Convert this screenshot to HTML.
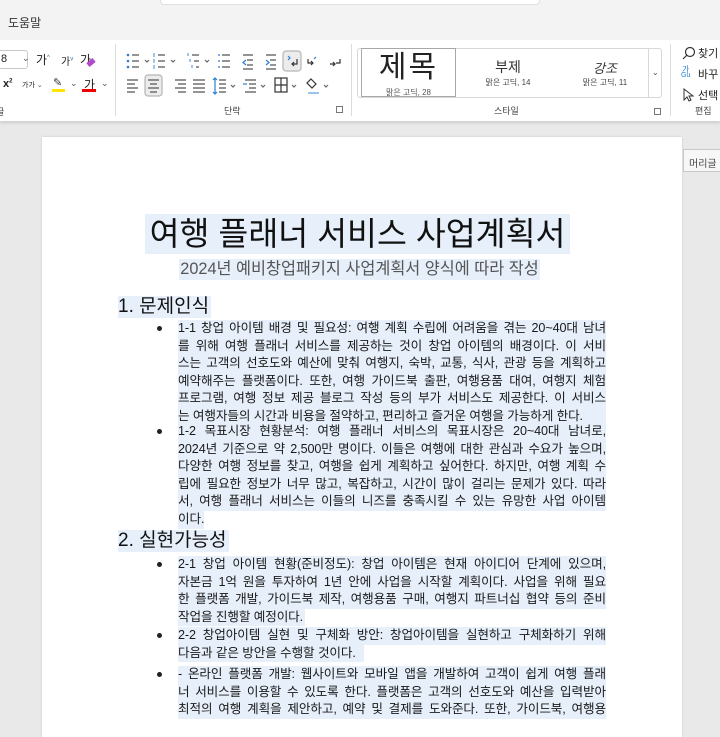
<!DOCTYPE html>
<html><head><meta charset="utf-8"><style>
*{margin:0;padding:0;box-sizing:border-box}
body{width:720px;height:715px;overflow:hidden;background:#e9e9e9;font-family:"Liberation Sans","Noto Sans CJK KR","NanumGothic",sans-serif;position:relative;color:#222}
.a{position:absolute;white-space:nowrap}
.top{position:absolute;left:0;top:0;width:720px;height:40px;background:#f3f3f3}
.rib{position:absolute;left:0;top:40px;width:720px;height:81px;background:#fff;box-shadow:0 2px 3px rgba(0,0,0,.12)}
.sep{position:absolute;top:44px;width:1px;height:72px;background:#dcdcdc}
.lbl{font-size:9px;color:#444}
.page{position:absolute;left:42px;top:137px;width:640px;height:600px;background:#fff;box-shadow:0 0 2px rgba(0,0,0,.15)}
.hl{background:#e6effa}
.ln{position:absolute;left:178px;width:428px;font-size:12.6px;line-height:17.6px;height:17.6px;text-align:justify;text-align-last:justify;white-space:nowrap;background:#e6effa;color:#1a1a1a;letter-spacing:-.1px}
.ln.l{text-align-last:left}
.b{position:absolute;left:157px;width:5px;height:5px;border-radius:50%;background:#222}
.h{position:absolute;left:118px;font-size:19px;line-height:22px;background:#e6effa;padding-right:2px;color:#111}
svg{position:absolute}
</style></head><body>
<div class="top"></div>
<div class="a" style="left:160px;top:0;width:380px;height:5px;background:#fff;border:1px solid #e0e0e0;border-top:none;border-radius:0 0 4px 4px"></div>
<div class="a" style="left:8px;top:14px;font-size:12px;color:#333">도움말</div>
<div class="rib"></div>
<div class="a" style="left:-4px;top:50px;width:32px;height:19px;border:1px solid #c8c8c8;border-radius:3px;background:#fff;font-size:11px;padding:2px 0 0 4px">8</div>
<div class="a" style="left:22px;top:53px;font-size:9px;color:#555">⌄</div>
<div class="a" style="left:36px;top:51px;font-size:12px">가<sup style="font-size:6px;color:#27a">^</sup></div>
<div class="a" style="left:61px;top:53px;font-size:10px">가<sup style="font-size:6px;color:#27a">v</sup></div>
<div class="a" style="left:80px;top:51px;font-size:12px">가</div>
<div class="a" style="left:87px;top:60px;width:8px;height:5px;background:#b04bc9;transform:rotate(-40deg)"></div>
<div class="a" style="left:3px;top:78px;font-size:11px;font-weight:bold">x<sup style="font-size:6px">2</sup></div>
<div class="a" style="left:22px;top:80px;font-size:7px">가가 <span style="color:#555">⌄</span></div>
<div class="a" style="left:53px;top:76px;font-size:11px;color:#333">✎</div>
<div class="a" style="left:52px;top:89px;width:13px;height:3px;background:#ffe600"></div>
<div class="a" style="left:70px;top:78px;font-size:9px;color:#555">⌄</div>
<div class="a" style="left:84px;top:76px;font-size:12px">가</div>
<div class="a" style="left:82px;top:89px;width:14px;height:3px;background:#e00"></div>
<div class="a" style="left:101px;top:78px;font-size:9px;color:#555">⌄</div>
<div class="a lbl" style="left:-4px;top:105px">글</div>
<div class="sep" style="left:115px"></div>
<svg width="240" height="60" style="left:115px;top:48px" stroke="#555" stroke-width="1.2" fill="none">
 <g><circle cx="13" cy="7" r="1.3" fill="#2a7fd4" stroke="none"/><circle cx="13" cy="13" r="1.3" fill="#2a7fd4" stroke="none"/><circle cx="13" cy="19" r="1.3" fill="#2a7fd4" stroke="none"/><path d="M17 7h7M17 13h7M17 19h7"/><path d="M30 12l2 2 2-2" stroke="#666"/></g>
 <g transform="translate(26,0)"><path d="M17 7h7M17 13h7M17 19h7"/><path d="M13 5v4M13 11v4M13 17v4" stroke="#2a7fd4" stroke-width=".9"/><path d="M30 12l2 2 2-2" stroke="#666"/></g>
 <g transform="translate(60,0)"><path d="M17 7h7M19 13h5M21 19h3"/><path d="M13 5v3M15 11v3M17 17v3" stroke="#2a7fd4" stroke-width=".9"/><path d="M30 12l2 2 2-2" stroke="#666"/></g>
 <g transform="translate(90,0)"><path d="M17 7h8M17 13h8M17 19h8"/><path d="M13 7h2M13 13h2M13 19h2" stroke="#2a7fd4"/></g>
 <path d="M128 7h10M132 12h6M132 17h6M128 21h10"/><path d="M131 12l-3 2.5 3 2.5" stroke="#2a7fd4"/>
 <path d="M151 7h10M155 12h6M155 17h6M151 21h10"/><path d="M151 12l3 2.5-3 2.5" stroke="#2a7fd4"/>
 <rect x="168" y="3" width="18" height="20" rx="3" fill="#ececec" stroke="#b5b5b5"/>
 <path d="M173 8l2 2-2 2" stroke="#2a7fd4"/><path d="M182 11v5h-5M179 14l-2 2 2 2" stroke="#333"/>
 <path d="M193 11v4h5M196 13l2 2-2 2" stroke="#333"/><path d="M201 9l-2 2" stroke="#2a7fd4"/>
 <path d="M215 16h5M218 14l2 2-2 2" stroke="#333"/><path d="M225 11v4h-4" stroke="#333"/>
 <path d="M12 32h11M12 36h8M12 40h11M12 44h8"/>
 <rect x="30" y="27" width="17" height="21" rx="3" fill="#ececec" stroke="#b5b5b5"/><path d="M33 32h11M35 36h7M33 40h11M35 44h7"/>
 <path d="M60 32h11M63 36h8M60 40h11M63 44h8"/>
 <path d="M78 32h12M78 36h12M78 40h12M78 44h12"/>
 <path d="M104 32h7M104 36h7M104 40h7M104 44h7"/><path d="M100 30v16M98 32l2-2 2 2M98 44l2 2 2-2" stroke="#2a7fd4"/><path d="M116 37l2 2 2-2" stroke="#666"/>
 <path d="M130 32h11M134 36h7M134 40h7M130 44h11"/><path d="M128 36h4" stroke="#2a7fd4"/><path d="M146 37l2 2 2-2" stroke="#666"/>
 <rect x="160" y="30" width="12" height="14" stroke="#333"/><path d="M166 30v14M160 37h12" stroke="#333"/><path d="M177 37l2 2 2-2" stroke="#666"/>
 <path d="M196 31l5 5-4 4-5-5z" stroke="#333"/><path d="M193 45h11" stroke="#9cc3ea" stroke-width="2"/><path d="M209 37l2 2 2-2" stroke="#666"/>
</svg>
<div class="a lbl" style="left:224px;top:104px">단락</div>
<div class="a" style="left:336px;top:106px;width:7px;height:7px;border:1px solid #777"></div>
<div class="sep" style="left:351px"></div>
<div class="a" style="left:357px;top:48px;width:305px;height:50px;border:1px solid #d8d8d8;border-radius:3px"></div>
<div class="a" style="left:361px;top:48px;width:95px;height:49px;border:1px solid #a8a8a8;overflow:hidden;text-align:center">
 <div style="font-size:30px;line-height:34px;margin-top:2px;letter-spacing:2px">제목</div>
 <div style="font-size:8px;color:#555;margin-top:2px">맑은 고딕, 28</div>
</div>
<div class="a" style="left:478px;top:57px;width:60px;text-align:center;font-size:14px;color:#333">부제</div>
<div class="a" style="left:470px;top:77px;width:76px;text-align:center;font-size:8px;color:#444">맑은 고딕, 14</div>
<div class="a" style="left:575px;top:58px;width:60px;text-align:center;font-size:13px;font-style:italic;color:#333">강조</div>
<div class="a" style="left:567px;top:77px;width:76px;text-align:center;font-size:8px;color:#444">맑은 고딕, 11</div>
<div class="a" style="left:648px;top:48px;width:1px;height:50px;background:#d8d8d8"></div>
<div class="a" style="left:652px;top:68px;font-size:8px;color:#555">⌄</div>
<div class="a lbl" style="left:494px;top:104px">스타일</div>
<div class="a" style="left:654px;top:108px;width:7px;height:7px;border:1px solid #777"></div>
<div class="sep" style="left:670px"></div>
<svg width="14" height="14" style="left:682px;top:46px" stroke="#333" stroke-width="1.2" fill="none"><circle cx="8" cy="6" r="4.5"/><path d="M5 9l-4 4"/></svg>
<div class="a" style="left:698px;top:45px;font-size:11px">찾기</div>
<div class="a" style="left:682px;top:64px;font-size:8px;color:#2a7fd4">가<br></div>
<div class="a" style="left:681px;top:72px;font-size:7px;color:#2a7fd4">Gu</div>
<div class="a" style="left:698px;top:66px;font-size:11px">바꾸</div>
<svg width="12" height="14" style="left:682px;top:88px" stroke="#333" stroke-width="1" fill="none"><path d="M2 1v11l3-3 2 4 2-1-2-4h4z"/></svg>
<div class="a" style="left:698px;top:87px;font-size:11px">선택</div>
<div class="a lbl" style="left:695px;top:104px">편집</div>
<div class="page"></div>
<div class="a" style="left:683px;top:149px;width:40px;height:23px;border:1px solid #c8c8c8;background:#f7f7f7;font-size:10px;color:#444;padding:5px 0 0 5px">머리글</div>
<div class="a hl" style="left:145px;top:214px;width:425px;height:40px"></div>
<div class="a" style="left:145px;top:212px;width:425px;text-align:center;font-size:32.5px;line-height:44px;color:#111;letter-spacing:0">여행 플래너 서비스 사업계획서</div>
<div class="a hl" style="left:179px;top:259px;width:361px;height:21px"></div>
<div class="a" style="left:179px;top:259px;width:361px;text-align:center;font-size:16.3px;line-height:21px;color:#555">2024년 예비창업패키지 사업계획서 양식에 따라 작성</div>

<div class="h" style="top:296px">1. 문제인식</div>
<div class="b" style="top:326px"></div>
<div class="ln" style="top:320px">1-1 창업 아이템 배경 및 필요성: 여행 계획 수립에 어려움을 겪는 20~40대 남녀</div>
<div class="ln" style="top:337.6px">를 위해 여행 플래너 서비스를 제공하는 것이 창업 아이템의 배경이다. 이 서비</div>
<div class="ln" style="top:355.2px">스는 고객의 선호도와 예산에 맞춰 여행지, 숙박, 교통, 식사, 관광 등을 계획하고</div>
<div class="ln" style="top:372.8px">예약해주는 플랫폼이다. 또한, 여행 가이드북 출판, 여행용품 대여, 여행지 체험</div>
<div class="ln" style="top:390.4px">프로그램, 여행 정보 제공 블로그 작성 등의 부가 서비스도 제공한다. 이 서비스</div>
<div class="ln l" style="top:408px">는 여행자들의 시간과 비용을 절약하고, 편리하고 즐거운 여행을 가능하게 한다.</div>

<div class="b" style="top:429px"></div>
<div class="ln" style="top:423px">1-2 목표시장 현황분석: 여행 플래너 서비스의 목표시장은 20~40대 남녀로,</div>
<div class="ln" style="top:440.6px">2024년 기준으로 약 2,500만 명이다. 이들은 여행에 대한 관심과 수요가 높으며,</div>
<div class="ln" style="top:458.2px">다양한 여행 정보를 찾고, 여행을 쉽게 계획하고 싶어한다. 하지만, 여행 계획 수</div>
<div class="ln" style="top:475.8px">립에 필요한 정보가 너무 많고, 복잡하고, 시간이 많이 걸리는 문제가 있다. 따라</div>
<div class="ln" style="top:493.4px">서, 여행 플래너 서비스는 이들의 니즈를 충족시킬 수 있는 유망한 사업 아이템</div>
<div class="ln l" style="top:511px;width:26px">이다.</div>

<div class="h" style="top:530px">2. 실현가능성</div>
<div class="b" style="top:562px"></div>
<div class="ln" style="top:556px">2-1 창업 아이템 현황(준비정도): 창업 아이템은 현재 아이디어 단계에 있으며,</div>
<div class="ln" style="top:573.6px">자본금 1억 원을 투자하여 1년 안에 사업을 시작할 계획이다. 사업을 위해 필요</div>
<div class="ln" style="top:591.2px">한 플랫폼 개발, 가이드북 제작, 여행용품 구매, 여행지 파트너십 협약 등의 준비</div>
<div class="ln l" style="top:608.8px;width:127px">작업을 진행할 예정이다.</div>

<div class="b" style="top:633px"></div>
<div class="ln" style="top:627px">2-2 창업아이템 실현 및 구체화 방안: 창업아이템을 실현하고 구체화하기 위해</div>
<div class="ln l" style="top:644.6px;width:186px">다음과 같은 방안을 수행할 것이다.</div>

<div class="b" style="top:672px"></div>
<div class="ln" style="top:666px">- 온라인 플랫폼 개발: 웹사이트와 모바일 앱을 개발하여 고객이 쉽게 여행 플래</div>
<div class="ln" style="top:683.6px">너 서비스를 이용할 수 있도록 한다. 플랫폼은 고객의 선호도와 예산을 입력받아</div>
<div class="ln" style="top:701.2px">최적의 여행 계획을 제안하고, 예약 및 결제를 도와준다. 또한, 가이드북, 여행용</div>
</body></html>
